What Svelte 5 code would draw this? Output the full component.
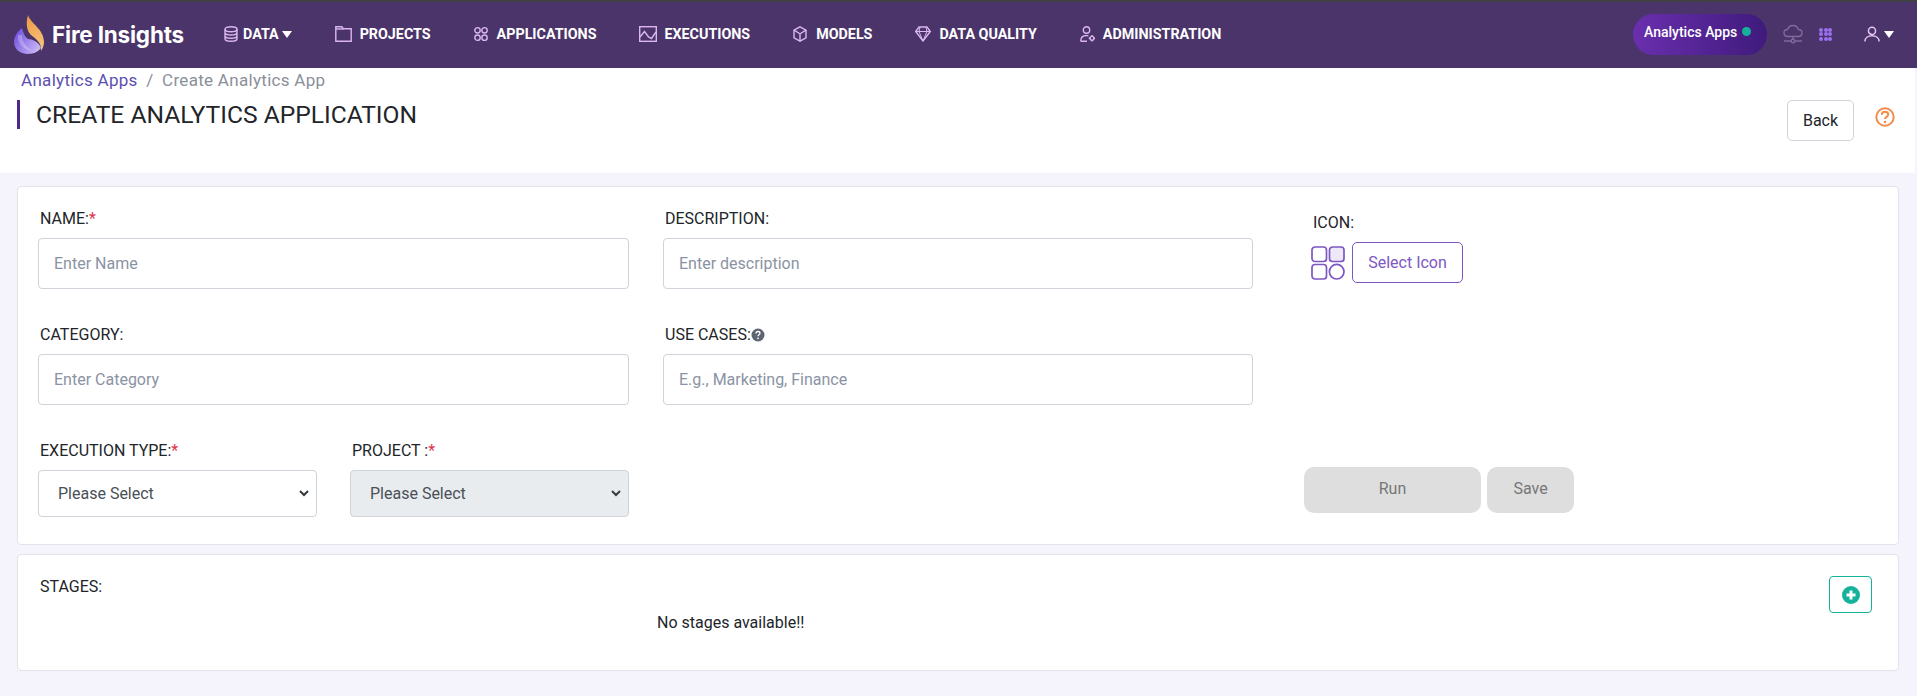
<script lang="ts">
    const navItems = [
        { label: "DATA", icon: "data", w: 14, caret: true },
        { label: "PROJECTS", icon: "projects", w: 17 },
        { label: "APPLICATIONS", icon: "apps", w: 14 },
        { label: "EXECUTIONS", icon: "executions", w: 18 },
        { label: "MODELS", icon: "models", w: 14 },
        { label: "DATA QUALITY", icon: "quality", w: 16 },
        { label: "ADMINISTRATION", icon: "admin", w: 15 }
    ];
</script>

<div class="page">
    <nav class="topnav">
        <div class="brand">
            <svg class="logo" viewBox="0 0 31 40" width="31" height="40">
                <defs>
                    <linearGradient id="flameTop" x1="0.4" y1="0" x2="0.6" y2="1">
                        <stop offset="0" stop-color="#ee9c45" />
                        <stop offset="1" stop-color="#f5c683" />
                    </linearGradient>
                    <linearGradient id="flameLow" x1="0" y1="0.2" x2="1" y2="0.8">
                        <stop offset="0" stop-color="#6f4fe0" />
                        <stop offset="1" stop-color="#cdbcf6" />
                    </linearGradient>
                </defs>
                <path d="M14 0C16 8 30 14 30 27 30 30 29 33 27 36 28 28 22 24 17 20 12 15 12 7 14 0z" fill="url(#flameTop)" />
                <path d="M8 13C3 17 0 22 0 27 0 34 6 39 14 39 20 39 25 36 27 33 25 27 18 24 14 24 11 22 9 18 8 13z" fill="url(#flameLow)" />
                <path d="M4 20C3 27 8 34 18 36 12 31 8 27 8 20z" fill="#fff" opacity="0.25" />
            </svg>
            <span class="brand-name">Fire Insights</span>
        </div>
        <ul class="menu">
            {#each navItems as item}
                <li class="menu-item">
                    <svg class={"menu-icon icon-" + item.icon} viewBox={`0 0 ${item.w} 16`} width={item.w} height="16" fill="none" stroke="#dcb6ee" stroke-width="1.400">
                        {#if item.icon === "data"}
                            <ellipse cx="7" cy="3.200" rx="6" ry="2.500" />
                            <path d="M1 3.200v9.600c0 1.400 2.700 2.500 6 2.500s6-1.100 6-2.500V3.200M1 6.500c0 1.400 2.700 2.500 6 2.500s6-1.100 6-2.500M1 9.800c0 1.400 2.700 2.500 6 2.500s6-1.100 6-2.500" />
                        {:else if item.icon === "projects"}
                            <path d="M.8 15.200V.8h6l1.700 2h7.700v12.400z" />
                            <path d="M.8 3h7.700" />
                        {:else if item.icon === "apps"}
                            <circle cx="3.500" cy="4.300" r="2.700" />
                            <circle cx="10.500" cy="4.300" r="2.700" />
                            <circle cx="3.500" cy="11.700" r="2.700" />
                            <circle cx="10.500" cy="11.700" r="2.700" />
                        {:else if item.icon === "executions"}
                            <rect x=".7" y=".7" width="16.600" height="14.600" />
                            <path d="M1 11l4.500-5.500L9.500 11l3 1.500L17 6" />
                        {:else if item.icon === "models"}
                            <path d="M7 .8l6 3.400v7.600l-6 3.400-6-3.400V4.200z" />
                            <path d="M1 4.200l6 3.600 6-3.600M7 7.800v7.400" />
                        {:else if item.icon === "quality"}
                            <path d="M4 1h8l3.300 4.500L8 15 .7 5.500z" />
                            <path d="M.7 5.500h14.600M5 1.300L4 5.500 8 15l4-9.500-1-4.200" stroke-width="1" />
                        {:else}
                            <circle cx="6.500" cy="4" r="3.200" />
                            <path d="M.7 15.200c0-3.600 2.300-5.700 5.800-5.700.7 0 1.300.1 1.900.3M.7 15.200h6.300" />
                            <circle cx="12" cy="12.300" r="1.900" />
                            <path d="M12 9v1.400M12 14.200v1.400M8.700 12.300h1.400M13.900 12.300h1.100" />
                        {/if}
                    </svg>
                    <span>{item.label}</span>
                    {#if item.caret}<i class="caret"></i>{/if}
                </li>
            {/each}
        </ul>
        <div class="nav-right">
            <div class="pill">Analytics Apps<i class="dot"></i></div>
            <svg class="cloud" viewBox="0 0 20 20" width="20" height="20" fill="none" stroke="#7d6b9a" stroke-width="1.400">
                <path d="M5 12.500c-2.500 0-4-1.500-4-3.500s1.500-3.500 3.500-3.500C5.500 3 7.500 1.500 10 1.500s4.500 1.500 5.500 4c2 0 3.500 1.500 3.500 3.500s-1.500 3.500-4 3.500z" />
                <path d="M10 12.500v3M1 17h7M12 17h7" />
                <circle cx="10" cy="17" r="1.800" />
            </svg>
            <div class="app-grid">
                {#each { length: 9 } as _}<i></i>{/each}
            </div>
            <svg class="user" viewBox="0 0 18 18" width="16" height="16" fill="none" stroke="#e4c4f2" stroke-width="1.700">
                <circle cx="9" cy="5.500" r="4" />
                <path d="M1 17.500c0-4 3.500-6.500 8-6.500s8 2.500 8 6.500" />
            </svg>
            <i class="caret user-caret"></i>
        </div>
    </nav>

    <header class="page-head">
        <div class="head-left">
            <div class="crumbs">
                <a href="#top">Analytics Apps</a>
                <span class="sep">/</span>
                <span class="current">Create Analytics App</span>
            </div>
            <h1>CREATE ANALYTICS APPLICATION</h1>
        </div>
        <div class="head-right">
            <button class="btn-back">Back</button>
            <svg class="help" viewBox="0 0 20 20" width="20" height="20">
                <circle cx="10" cy="10" r="8.700" fill="none" stroke="#f58a4b" stroke-width="2" />
                <path d="M6.800 7.800c0-2 1.400-3 3.200-3s3.200 1 3.200 2.700c0 2.400-3.200 2.300-3.200 4.500" fill="none" stroke="#f58a4b" stroke-width="2" />
                <circle cx="10" cy="15" r="1.300" fill="#f58a4b" />
            </svg>
        </div>
    </header>

    <section class="card form-card">
        <div class="form-main">
            <div class="field">
                <label for="app-name">NAME:<em>*</em></label>
                <input id="app-name" placeholder="Enter Name" />
            </div>
            <div class="field">
                <label for="app-desc">DESCRIPTION:</label>
                <input id="app-desc" placeholder="Enter description" />
            </div>
            <div class="field">
                <label for="app-cat">CATEGORY:</label>
                <input id="app-cat" placeholder="Enter Category" />
            </div>
            <div class="field">
                <label for="app-use" class="with-hint">USE CASES:<svg viewBox="0 0 14 14" width="14" height="14">
                    <circle cx="7" cy="7" r="6.500" fill="#5d6472" />
                    <path d="M5 5.500c0-1.300.9-2 2-2s2 .7 2 1.800c0 1.500-2 1.500-2 3" fill="none" stroke="#fff" stroke-width="1.300" />
                    <circle cx="7" cy="10.300" r=".9" fill="#fff" />
                </svg></label>
                <input id="app-use" placeholder="E.g., Marketing, Finance" />
            </div>
            <div class="select-pair">
                <div class="field">
                    <label for="exec-type">EXECUTION TYPE:<em>*</em></label>
                    <select id="exec-type"><option>Please Select</option></select>
                </div>
                <div class="field">
                    <label for="project">PROJECT :<em>*</em></label>
                    <select id="project" disabled><option>Please Select</option></select>
                </div>
            </div>
        </div>
        <div class="form-side">
            <div class="icon-block">
                <span class="side-label">ICON:</span>
                <div class="icon-pick">
                    <svg viewBox="0 0 34 34" width="34" height="34" fill="none" stroke="#7e57c2" stroke-width="1.700">
                        <rect x="1" y="1" width="14.500" height="14.500" rx="3" />
                        <rect x="18.500" y="1" width="14.500" height="14.500" rx="3" fill="#eee8f8" />
                        <rect x="1" y="18.500" width="14.500" height="14.500" rx="3" />
                        <circle cx="25.700" cy="25.700" r="7.300" />
                    </svg>
                    <button class="btn-icon">Select Icon</button>
                </div>
            </div>
            <div class="actions">
                <button class="btn-run" disabled>Run</button>
                <button class="btn-save" disabled>Save</button>
            </div>
        </div>
    </section>

    <section class="card stages-card">
        <div class="stages-head">
            <span class="stages-title">STAGES:</span>
            <button class="btn-add" aria-label="Add stage">
                <svg viewBox="0 0 18 18" width="18" height="18">
                    <circle cx="9" cy="9" r="9" fill="#14b29a" />
                    <path d="M9 4.500v9M4.500 9h9" stroke="#fff" stroke-width="3" />
                </svg>
            </button>
        </div>
        <p class="empty">No stages available!!</p>
    </section>
</div>

<style>
    :global(body) {
        margin: 0;
        background: #f5f4fd;
        font-family: Roboto, "Liberation Sans", sans-serif;
        color: #212529;
    }

    .page {
        min-height: 696px;
        background: #f5f4fd;
        overflow: hidden;
    }

    .topnav {
        display: flex;
        align-items: center;
        height: 64px;
        padding-bottom: 2px;
        background: #4a3469;
        border-top: 2px solid #3f3f46;
    }

    .brand {
        display: flex;
        align-items: center;
        margin-left: 14px;
        width: 210px;
        flex-shrink: 0;
    }

    .logo {
        margin-top: 2px;
    }

    .brand-name {
        margin-left: 7px;
        color: #fff;
        font-family: Inter, Roboto, sans-serif;
        font-size: 22.5px;
        font-weight: 700;
        letter-spacing: -0.2px;
    }

    .menu {
        display: flex;
        align-items: center;
        list-style: none;
        margin: 0;
        padding: 0;
        gap: 43px;
    }

    .menu-item {
        display: flex;
        align-items: center;
        color: #fff;
        font-size: 14.3px;
        font-weight: 700;
    }

    .menu-icon {
        flex-shrink: 0;
        margin-right: 8px;
    }

    .icon-data {
        margin-right: 5px;
    }

    .icon-apps,
    .icon-models {
        margin-right: 9px;
    }

    .icon-executions {
        margin-right: 7px;
    }

    .caret {
        display: inline-block;
        width: 0;
        height: 0;
        margin-left: 3px;
        border-left: 5px solid transparent;
        border-right: 5px solid transparent;
        border-top: 7px solid #fff;
    }

    .nav-right {
        display: flex;
        align-items: center;
        margin-left: auto;
        margin-right: 23px;
    }

    .pill {
        display: flex;
        align-items: center;
        box-sizing: border-box;
        width: 134px;
        height: 41px;
        padding: 0 0 5px 11px;
        border-radius: 21px;
        background: linear-gradient(90deg, #6a2fae, #3f1a7c);
        color: #fff;
        font-size: 14px;
        font-weight: 500;
        white-space: nowrap;
    }

    .dot {
        width: 9px;
        height: 9px;
        margin-left: 5px;
        border-radius: 50%;
        background: #14b29a;
    }

    .cloud {
        margin-left: 16px;
    }

    .app-grid {
        display: grid;
        grid-template-columns: repeat(3, 4px);
        gap: 0.5px;
        margin-left: 16px;
    }

    .app-grid i {
        width: 4px;
        height: 4px;
        border-radius: 50%;
        background: #9a6ff0;
    }

    .user {
        margin-left: 32px;
    }

    .user-caret {
        margin-left: 4px;
    }

    .page-head {
        display: flex;
        justify-content: space-between;
        height: 105px;
        margin-right: 2px;
        background: #fff;
    }

    .head-left {
        padding-left: 17px;
    }

    .crumbs {
        padding: 2px 0 0 4px;
        font-size: 17px;
        line-height: 20px;
        letter-spacing: 0.3px;
    }

    .crumbs a {
        color: #5a4fb0;
        text-decoration: none;
    }

    .sep {
        margin: 0 4px;
        color: #8a8f9a;
    }

    .current {
        color: #8a8f9a;
    }

    h1 {
        margin: 10px 0 0;
        padding-left: 16px;
        border-left: 3px solid #4a2a8c;
        font-size: 24.6px;
        font-weight: 400;
        line-height: 29px;
        color: #212529;
    }

    .head-right {
        display: flex;
        align-items: flex-start;
        padding: 32px 20px 0 0;
    }

    .btn-back {
        width: 67px;
        height: 41px;
        border: 1px solid #ced4da;
        border-radius: 5px;
        background: #fff;
        color: #212529;
        font: 400 16px Roboto, sans-serif;
    }

    .help {
        margin: 7px 0 0 21px;
    }

    .card {
        box-sizing: border-box;
        width: 1882px;
        margin-left: 17px;
        background: #fff;
        border: 1px solid #e3e3ea;
        border-radius: 4px;
    }

    .form-card {
        display: flex;
        height: 359px;
        margin-top: 13px;
        padding: 22px 20px 0;
    }

    .form-main {
        display: grid;
        grid-template-columns: 591px 590px;
        grid-auto-rows: 96px;
        column-gap: 34px;
        row-gap: 20px;
        width: 1216px;
    }

    .select-pair {
        display: grid;
        grid-template-columns: 279px 279px;
        column-gap: 33px;
    }

    .field {
        display: flex;
        flex-direction: column;
    }

    label,
    .side-label,
    .stages-title {
        font-size: 16px;
        font-weight: 400;
        line-height: 20px;
        color: #212529;
    }

    label {
        margin: 0 0 9px 2px;
    }

    label em {
        font-style: normal;
        color: #e0344b;
    }

    .with-hint {
        display: flex;
        align-items: center;
    }

    input,
    select {
        box-sizing: border-box;
        width: 100%;
        border: 1px solid #ced4da;
        border-radius: 4px;
        background-color: #fff;
        color: #495057;
        font: 400 16px Roboto, sans-serif;
    }

    input {
        height: 51px;
        padding: 0 15px;
    }

    input::placeholder {
        color: #8a93a3;
    }

    select {
        height: 47px;
        padding: 0 19px;
        appearance: none;
        background-image: url("data:image/svg+xml,%3csvg xmlns='http://www.w3.org/2000/svg' viewBox='0 0 10 7'%3e%3cpath fill='none' stroke='%23343a40' stroke-width='2' d='M1 1l4 4 4-4'/%3e%3c/svg%3e");
        background-repeat: no-repeat;
        background-position: right 7px center;
        background-size: 10px 7px;
    }

    select:disabled {
        background-color: #e9ecef;
        opacity: 1;
    }

    .form-side {
        display: flex;
        flex-direction: column;
        margin-left: 57px;
    }

    .icon-block {
        padding-top: 4px;
    }

    .side-label {
        display: block;
        margin-left: 2px;
    }

    .icon-pick {
        display: flex;
        align-items: center;
        gap: 7px;
        margin-top: 9px;
    }

    .btn-icon {
        width: 111px;
        height: 41px;
        border: 1px solid #7e57c2;
        border-radius: 5px;
        background: #fff;
        color: #7e57c2;
        font: 400 16px Roboto, sans-serif;
    }

    .actions {
        display: flex;
        gap: 6px;
        margin-top: 184px;
        margin-left: -7px;
    }

    .btn-run,
    .btn-save {
        height: 46px;
        padding: 0 0 3px;
        border: none;
        border-radius: 10px;
        background: #dedede;
        color: #777;
        font: 400 16px Roboto, sans-serif;
    }

    .btn-run {
        width: 177px;
    }

    .btn-save {
        width: 87px;
    }

    .stages-card {
        position: relative;
        height: 117px;
        margin-top: 9px;
        padding: 21px 20px 0;
    }

    .stages-head {
        display: flex;
        justify-content: space-between;
        align-items: flex-start;
    }

    .stages-title {
        margin: 1px 0 0 2px;
    }

    .btn-add {
        display: flex;
        align-items: center;
        justify-content: center;
        width: 43px;
        height: 37px;
        margin: 0 6px 0 0;
        padding: 0;
        border: 1px solid #14b29a;
        border-radius: 4px;
        background: #fff;
    }

    .empty {
        margin: 0;
        padding-left: 619px;
        font-size: 16px;
        line-height: 20px;
        color: #212529;
    }
</style>
